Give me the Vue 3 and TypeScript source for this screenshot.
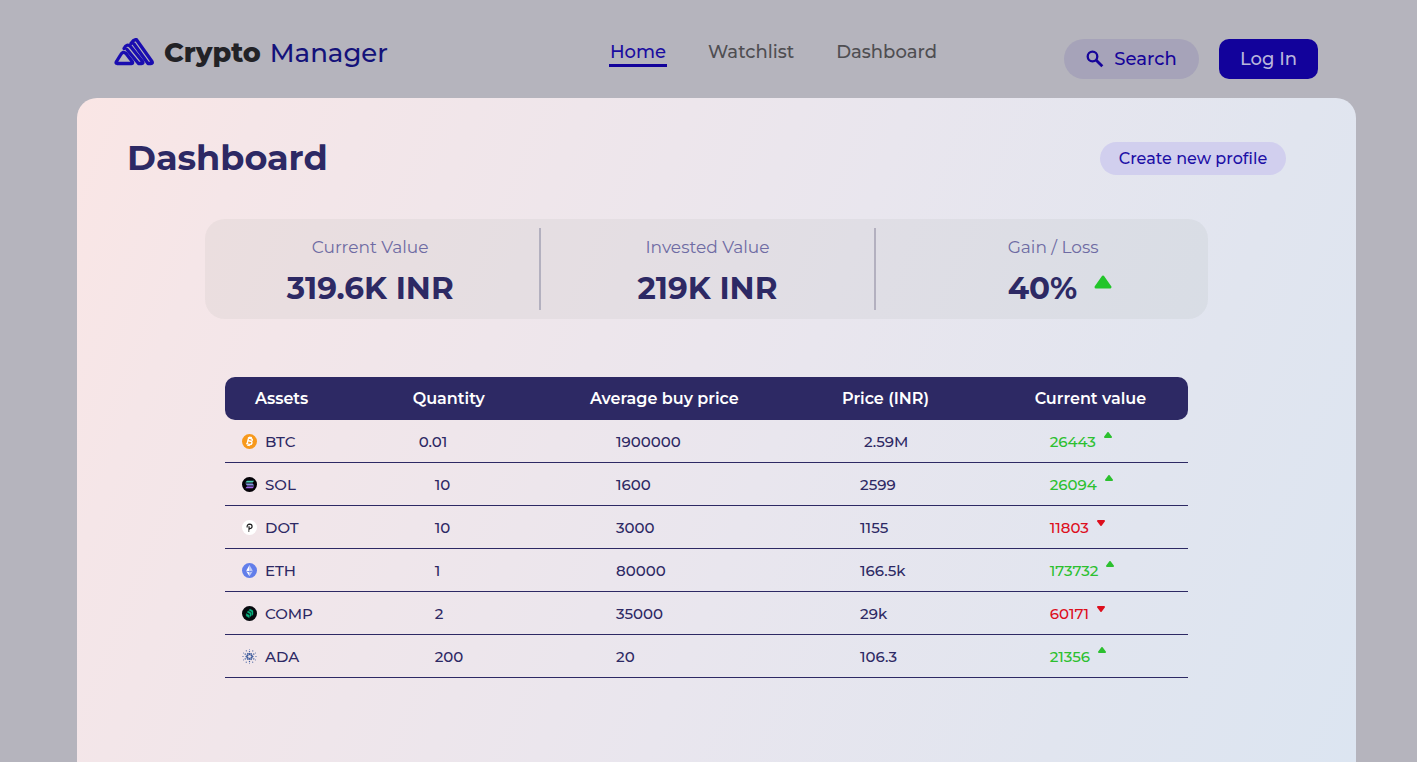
<script setup lang="ts">
type CoinId = 'btc' | 'sol' | 'dot' | 'eth' | 'comp' | 'ada'

interface Holding {
  id: CoinId
  name: string
  quantity: string
  average: string
  price: string
  current: string
  up: boolean
}

const links = [
  { label: 'Home', href: '#home', active: true },
  { label: 'Watchlist', href: '#watchlist', active: false },
  { label: 'Dashboard', href: '#dashboard', active: false },
]

const columns = ['Assets', 'Quantity', 'Average buy price', 'Price (INR)', 'Current value']

const holdings: Holding[] = [
  { id: 'btc', name: 'BTC', quantity: '0.01', average: '1900000', price: '2.59M', current: '26443', up: true },
  { id: 'sol', name: 'SOL', quantity: '10', average: '1600', price: '2599', current: '26094', up: true },
  { id: 'dot', name: 'DOT', quantity: '10', average: '3000', price: '1155', current: '11803', up: false },
  { id: 'eth', name: 'ETH', quantity: '1', average: '80000', price: '166.5k', current: '173732', up: true },
  { id: 'comp', name: 'COMP', quantity: '2', average: '35000', price: '29k', current: '60171', up: false },
  { id: 'ada', name: 'ADA', quantity: '200', average: '20', price: '106.3', current: '21356', up: true },
]

const ray = [0, 60, 120, 180, 240, 300]
</script>

<template>
  <div class="page">
    <header class="header">
      <a class="brand" href="#home">
        <svg class="brand-mark" viewBox="0 0 40 28" aria-hidden="true">
          <g fill="none" stroke="currentColor" stroke-width="3.300" stroke-linejoin="round" stroke-linecap="round">
            <path d="M3 25.500Q1.300 25.200 2.500 23.500L6.500 17Q9 12.500 12 15.500L18 23.300Q19.500 25.500 17.500 25.500Z" />
            <path d="M10 10.500Q13 5 16.500 8.500L28.500 23.500Q29.800 25.500 27.500 25.500H24.500L13 11.500" />
            <path d="M17 5.500Q20 1 22.500 1.700L38 23.500Q39 25.500 37 25.500H34L20 6" />
          </g>
        </svg>
        <span class="brand-text"><strong>Crypto</strong> Manager</span>
      </a>

      <nav class="nav" aria-label="Main">
        <a v-for="link in links" :key="link.label" :href="link.href" class="nav-link" :class="{ active: link.active }">{{ link.label }}</a>
      </nav>

      <div class="actions">
        <button type="button" class="search">
          <svg class="search-icon" viewBox="0 0 18 18" aria-hidden="true">
            <circle cx="6.500" cy="6.500" r="4.800" fill="none" stroke="currentColor" stroke-width="2.300" />
            <path d="M10 10l6.300 6.300" fill="none" stroke="currentColor" stroke-width="2.800" />
          </svg>
          <span>Search</span>
        </button>
        <button type="button" class="login">Log In</button>
      </div>
    </header>

    <main class="panel">
      <div class="panel-head">
        <h1>Dashboard</h1>
        <button type="button" class="create">Create new profile</button>
      </div>

      <section class="stats" aria-label="Summary">
        <div class="stat">
          <div>
            <p class="stat-label">Current Value</p>
            <p class="stat-value">319.6K INR</p>
          </div>
        </div>
        <div class="stat">
          <div>
            <p class="stat-label">Invested Value</p>
            <p class="stat-value">219K INR</p>
          </div>
        </div>
        <div class="stat gain">
          <div>
            <p class="stat-label">Gain / Loss</p>
            <p class="stat-value">
              40%
              <svg class="gain-mark" viewBox="0 0 18 14" aria-hidden="true">
                <path d="M9 2 16 12H2Z" fill="currentColor" stroke="currentColor" stroke-width="3" stroke-linejoin="round" />
              </svg>
            </p>
          </div>
        </div>
      </section>

      <table class="assets">
        <thead>
          <tr>
            <th v-for="column in columns" :key="column" scope="col">{{ column }}</th>
          </tr>
        </thead>
        <tbody>
          <tr v-for="row in holdings" :key="row.id" :class="row.id">
            <td>
              <div class="asset">
                <svg class="coin" viewBox="0 0 32 32" aria-hidden="true">
                  <template v-if="row.id === 'btc'">
                    <circle cx="16" cy="16" r="16" fill="#f7991c" />
                    <path d="M12.500 8l6 1.500q4.500 1.300 3.200 4.300-1 2-4 1.400 4.500 1 3.300 4.800-1.200 3-5.500 2L9 20.500M14 8.500 10.700 21.500M12.800 14.200l5 1.200M17 5.500l-.8 3.500M20 6.300l-.8 3.500M12.800 21.500l-.9 3.500M15.800 22.200l-.9 3.500" fill="none" stroke="#fff" stroke-width="3" />
                  </template>
                  <template v-else-if="row.id === 'sol'">
                    <circle cx="16" cy="16" r="16" fill="#050308" />
                    <path d="M10.500 8H26l-3.300 3.900H7.200Z" fill="#4fd0b8" />
                    <path d="M7.200 14H22.700l3.300 3.900H10.500Z" fill="#8595e4" />
                    <path d="M10.500 20H26l-3.300 3.900H7.200Z" fill="#a268ea" />
                  </template>
                  <template v-else-if="row.id === 'dot'">
                    <circle cx="16" cy="16" r="16" fill="#fff" />
                    <path d="M11 16q-1-7 5.500-7 5 .2 5 4.800-.3 4.700-5.500 4.700M15 13.500v8" fill="none" stroke="#222" stroke-width="2.600" />
                    <circle cx="14.500" cy="23.500" r="1.600" fill="#222" />
                  </template>
                  <template v-else-if="row.id === 'eth'">
                    <circle cx="16" cy="16" r="16" fill="#627eea" />
                    <path d="M16 4v13.500l-7-1.200Z" fill="#fff" />
                    <path d="M16 4l7 12.300-7 1.200Z" fill="#c0cbf7" />
                    <path d="M16 28v-7.500l-7-3Z" fill="#fff" />
                    <path d="M16 28l7-10.500-7 3Z" fill="#c0cbf7" />
                  </template>
                  <template v-else-if="row.id === 'comp'">
                    <circle cx="16" cy="16" r="16" fill="#070a0e" />
                    <path d="M17 6.500l6.500 3.700v8l-2.500 2v-7.500L15 9.200ZM13 10.500l6.500 3.700v7L17 22.500v-6l-6-3.300ZM9 16l6.500 3.700v5.500L9 21.300Z" fill="#0bb884" stroke="#0ba878" stroke-width="0.800" />
                  </template>
                  <template v-else>
                    <g v-for="angle in ray" :key="angle" :transform="`rotate(${angle} 16 16)`" fill="#3c5a9c">
                      <circle cx="16" cy="11" r="2.300" />
                      <circle cx="19.500" cy="10" r="1.700" />
                      <circle cx="16" cy="5.500" r="1.500" />
                      <circle cx="23" cy="4" r="1.200" />
                      <circle cx="16" cy="1.500" r="1" />
                    </g>
                  </template>
                </svg>
                <span>{{ row.name }}</span>
              </div>
            </td>
            <td>{{ row.quantity }}</td>
            <td>{{ row.average }}</td>
            <td>{{ row.price }}</td>
            <td>
              <div class="change" :class="row.up ? 'up' : 'down'">
                <span>{{ row.current }}</span>
                <svg class="trend" viewBox="0 0 8 6" role="img" :aria-label="row.up ? 'Up' : 'Down'">
                  <path :d="row.up ? 'M4 1 7 5H1Z' : 'M1 1H7L4 5Z'" fill="currentColor" stroke="currentColor" stroke-width="2" stroke-linejoin="round" />
                </svg>
              </div>
            </td>
          </tr>
        </tbody>
      </table>
    </main>
  </div>
</template>

<style>
body {
  margin: 0;
  background: #b5b4bd;
}
</style>

<style scoped>
.page {
  display: flex;
  flex-direction: column;
  min-height: 100vh;
  font-family: Montserrat, Inter, "Open Sans", sans-serif;
  color: #2d2964;
}

a {
  text-decoration: none;
}

button {
  border: 0;
  font-family: inherit;
  font-weight: 500;
  cursor: pointer;
}

.header {
  box-sizing: border-box;
  display: grid;
  grid-template-columns: 495fr 455fr auto;
  height: 98px;
  padding: 32px 99px 0 114px;
}

.brand {
  display: flex;
  align-items: center;
  gap: 10px;
  height: 40px;
  color: #1a0db0;
}

.brand-mark {
  width: 40px;
  height: 28px;
}

.brand-text {
  font-size: 26px;
  font-weight: 500;
  color: #14127a;
  white-space: nowrap;
}

.brand-text strong {
  margin-right: 2px;
  font-size: 27px;
  font-weight: 800;
  color: #222226;
}

.nav {
  display: flex;
  align-items: flex-start;
  gap: 40px;
  padding-top: 7px;
}

.nav-link {
  padding: 1px 1px 0;
  border-bottom: 3px solid transparent;
  font-size: 18px;
  line-height: 24px;
  font-weight: 500;
  color: #4f4e52;
}

.nav-link.active {
  border-color: #12029b;
  color: #1a0ca0;
}

.actions {
  display: flex;
  gap: 20px;
  padding-top: 7px;
}

.search {
  display: flex;
  align-items: center;
  justify-content: center;
  gap: 10px;
  width: 135px;
  height: 40px;
  border-radius: 20px;
  background: #a6a3b9;
  font-size: 18px;
  color: #16049a;
}

.search-icon {
  width: 18px;
  height: 18px;
}

.login {
  width: 99px;
  height: 40px;
  border-radius: 10px;
  background: #12029b;
  font-size: 18px;
  color: #b9b5dc;
}

.panel {
  flex: 1;
  margin: 0 61px 0 77px;
  border-radius: 20px 20px 0 0;
  background: linear-gradient(112deg, #fae6e5 0%, #f5e6e8 12%, #f1e6ea 26%, #e9e6ee 54%, #e1e5ef 80%, #dce5f1 100%);
}

.panel-head {
  display: flex;
  align-items: center;
  justify-content: space-between;
  padding: 38px 70px 0 50px;
}

h1 {
  margin: 0;
  font-size: 35px;
  line-height: 44px;
  font-weight: 700;
}

.create {
  width: 186px;
  height: 33px;
  padding: 0;
  border-radius: 17px;
  background: #d1cfee;
  font-size: 16px;
  color: #1d0fa6;
}

.stats {
  display: grid;
  grid-template-columns: repeat(3, 1fr);
  height: 100px;
  margin: 39px 148px 0 128px;
  border-radius: 20px;
  background: rgba(90, 105, 90, 0.06);
}

.stat {
  display: flex;
  justify-content: center;
  margin: 9px 0;
  padding-top: 9px;
  text-align: center;
}

.stat:first-child {
  padding-right: 4px;
}

.stat + .stat {
  border-left: 2px solid #b3b0bf;
}

.gain {
  padding-left: 36px;
  text-align: left;
}

.stat-label {
  margin: 0;
  font-size: 17px;
  line-height: 20px;
  color: #6e6ba3;
}

.stat-value {
  margin: 12px 0 0;
  font-size: 31px;
  line-height: 38px;
  font-weight: 700;
}

.gain-mark {
  width: 18px;
  height: 14px;
  margin: 0 0 10px 8px;
  color: #22c52a;
}

.assets {
  width: calc(100% - 316px);
  margin: 58px 168px 0 148px;
  border-spacing: 0;
  table-layout: fixed;
  font-size: 15px;
  font-weight: 500;
}

th,
td {
  box-sizing: border-box;
  height: 43px;
  padding: 0;
  text-align: left;
}

th {
  background: #2d2964;
  font-size: 16px;
  font-weight: 600;
  color: #fff;
}

th:nth-child(1) {
  width: 17%;
  padding-left: 30px;
  border-radius: 10px 0 0 10px;
}

th:nth-child(2) {
  width: 18%;
  padding-left: 24px;
}

th:nth-child(3) {
  width: 27%;
  padding-left: 28px;
}

th:nth-child(4) {
  width: 20%;
  padding-left: 20px;
}

th:nth-child(5) {
  padding-left: 20px;
  border-radius: 0 10px 10px 0;
}

td {
  padding-left: 46px;
  border-bottom: 1px solid #2d2964;
}

td:nth-child(1) {
  padding-left: 17px;
}

td:nth-child(3) {
  padding-left: 54px;
}

td:nth-child(4) {
  padding-left: 38px;
}

td:nth-child(5) {
  padding-left: 35px;
}

.btc td:nth-child(2) {
  padding-left: 30px;
}

.btc td:nth-child(4) {
  padding-left: 42px;
}

.asset,
.change {
  display: flex;
  align-items: center;
}

.asset {
  gap: 8px;
}

.coin {
  width: 15px;
  height: 15px;
}

.change {
  gap: 8px;
}

.trend {
  width: 8px;
  height: 6px;
  margin-bottom: 12px;
}

.up {
  color: #2cc02f;
}

.down {
  color: #dd0f1d;
}

.down .trend {
  margin-bottom: 8px;
}
</style>
